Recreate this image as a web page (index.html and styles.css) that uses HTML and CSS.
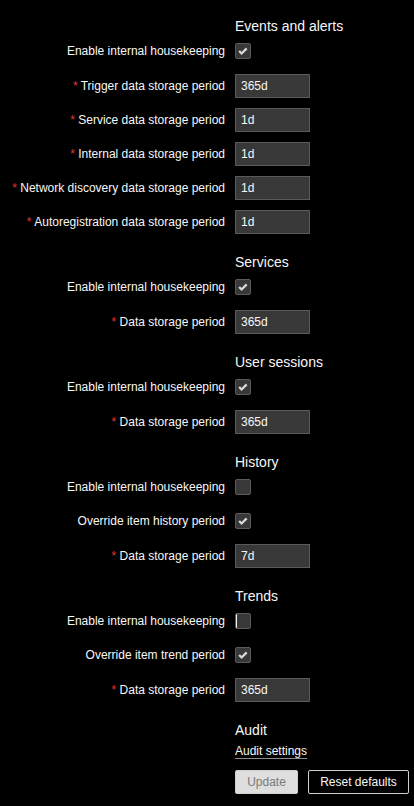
FILE: index.html
```html
<!DOCTYPE html>
<html lang="en">
<head>
<meta charset="utf-8">
<title>Housekeeping</title>
<link rel="stylesheet" href="styles.css">
</head>
<body>
<form class="form">
  <section class="section">
    <div class="row head-row"><span></span><h2 class="head">Events and alerts</h2></div>
    <div class="row cb-row"><label class="lbl">Enable internal housekeeping</label><span class="cb on"><svg viewBox="0 0 16 16"><path d="M3.6 8l2.8 2.8L12.2 5"/></svg></span></div>
    <div class="row in-row"><label class="lbl"><i class="req">*</i> Trigger data storage period</label><span class="inp">365d</span></div>
    <div class="row in-row"><label class="lbl"><i class="req">*</i> Service data storage period</label><span class="inp">1d</span></div>
    <div class="row in-row"><label class="lbl"><i class="req">*</i> Internal data storage period</label><span class="inp">1d</span></div>
    <div class="row in-row"><label class="lbl"><i class="req">*</i> Network discovery data storage period</label><span class="inp">1d</span></div>
    <div class="row in-row"><label class="lbl"><i class="req">*</i> Autoregistration data storage period</label><span class="inp">1d</span></div>
  </section>
  <section class="section">
    <div class="row head-row"><span></span><h2 class="head">Services</h2></div>
    <div class="row cb-row"><label class="lbl">Enable internal housekeeping</label><span class="cb on"><svg viewBox="0 0 16 16"><path d="M3.6 8l2.8 2.8L12.2 5"/></svg></span></div>
    <div class="row in-row"><label class="lbl"><i class="req">*</i> Data storage period</label><span class="inp">365d</span></div>
  </section>
  <section class="section">
    <div class="row head-row"><span></span><h2 class="head">User sessions</h2></div>
    <div class="row cb-row"><label class="lbl">Enable internal housekeeping</label><span class="cb on"><svg viewBox="0 0 16 16"><path d="M3.6 8l2.8 2.8L12.2 5"/></svg></span></div>
    <div class="row in-row"><label class="lbl"><i class="req">*</i> Data storage period</label><span class="inp">365d</span></div>
  </section>
  <section class="section">
    <div class="row head-row"><span></span><h2 class="head">History</h2></div>
    <div class="row cb-row"><label class="lbl">Enable internal housekeeping</label><span class="cb"></span></div>
    <div class="row cb-row"><label class="lbl">Override item history period</label><span class="cb on"><svg viewBox="0 0 16 16"><path d="M3.6 8l2.8 2.8L12.2 5"/></svg></span></div>
    <div class="row in-row"><label class="lbl"><i class="req">*</i> Data storage period</label><span class="inp">7d</span></div>
  </section>
  <section class="section">
    <div class="row head-row"><span></span><h2 class="head">Trends</h2></div>
    <div class="row cb-row"><label class="lbl">Enable internal housekeeping</label><span class="cb focus"></span></div>
    <div class="row cb-row"><label class="lbl">Override item trend period</label><span class="cb on"><svg viewBox="0 0 16 16"><path d="M3.6 8l2.8 2.8L12.2 5"/></svg></span></div>
    <div class="row in-row"><label class="lbl"><i class="req">*</i> Data storage period</label><span class="inp">365d</span></div>
  </section>
  <section class="section">
    <div class="row head-row"><span></span><h2 class="head">Audit</h2></div>
    <div class="row link-row"><span></span><a class="link">Audit settings</a></div>
    <div class="row btn-row"><span></span><div class="btns"><button type="button" class="btn btn-dis">Update</button><button type="button" class="btn btn-alt">Reset defaults</button></div></div>
  </section>
</form>
</body>
</html>
```
FILE: styles.css
```css
html, body {
  margin: 0;
  padding: 0;
  background: #000;
}
body {
  font-family: "Liberation Sans", Arial, sans-serif;
  font-size: 12px;
  color: #f2f2f2;
}
.form {
  padding-top: 8px;
}
.section {
  padding-top: 9px;
}
.row {
  display: grid;
  grid-template-columns: 225px auto;
  column-gap: 10px;
  align-items: center;
}
.head-row {
  margin-bottom: 5px;
}
.head {
  margin: 0;
  font-size: 14px;
  line-height: 18px;
  font-weight: normal;
  color: #f7f7f7;
}
.cb-row {
  height: 21px;
  margin-bottom: 13px;
}
.in-row {
  height: 24px;
  margin-bottom: 10px;
}
.lbl {
  text-align: right;
  white-space: nowrap;
  line-height: 14px;
  color: #f7f7f7;
}
.req {
  font-style: normal;
  color: #e33734;
}
.cb {
  display: block;
  box-sizing: border-box;
  width: 16px;
  height: 16px;
  background: #383838;
  border: 1px solid #5a5a5a;
  border-radius: 2px;
}
.cb svg {
  display: block;
  width: 14px;
  height: 14px;
  fill: none;
  stroke: #d9d9d9;
  stroke-width: 2.6;
}
.cb.focus {
  box-shadow: inset 1px 0 0 #f2f2f2;
}
.inp {
  display: block;
  box-sizing: border-box;
  width: 75px;
  height: 24px;
  padding: 0 5px;
  line-height: 22px;
  background: #383838;
  border: 1px solid #5a5a5a;
  color: #f7f7f7;
}
.link-row {
  height: 14px;
  margin-bottom: 12px;
}
.link {
  justify-self: start;
  line-height: 14px;
  color: #f7f7f7;
  border-bottom: 1px solid #8c8c8c;
}
.btns {
  display: flex;
  gap: 10px;
}
.btn {
  box-sizing: border-box;
  height: 24px;
  padding: 0 10px;
  font-family: "Liberation Sans", Arial, sans-serif;
  font-size: 12px;
  border-radius: 2px;
}
.btn-dis {
  width: 63px;
  background: #dedede;
  border: 1px solid #cfcfcf;
  color: #7a7a7a;
}
.btn-alt {
  width: 101px;
  background: #000;
  border: 1px solid #d0d0d0;
  color: #f7f7f7;
}
```
